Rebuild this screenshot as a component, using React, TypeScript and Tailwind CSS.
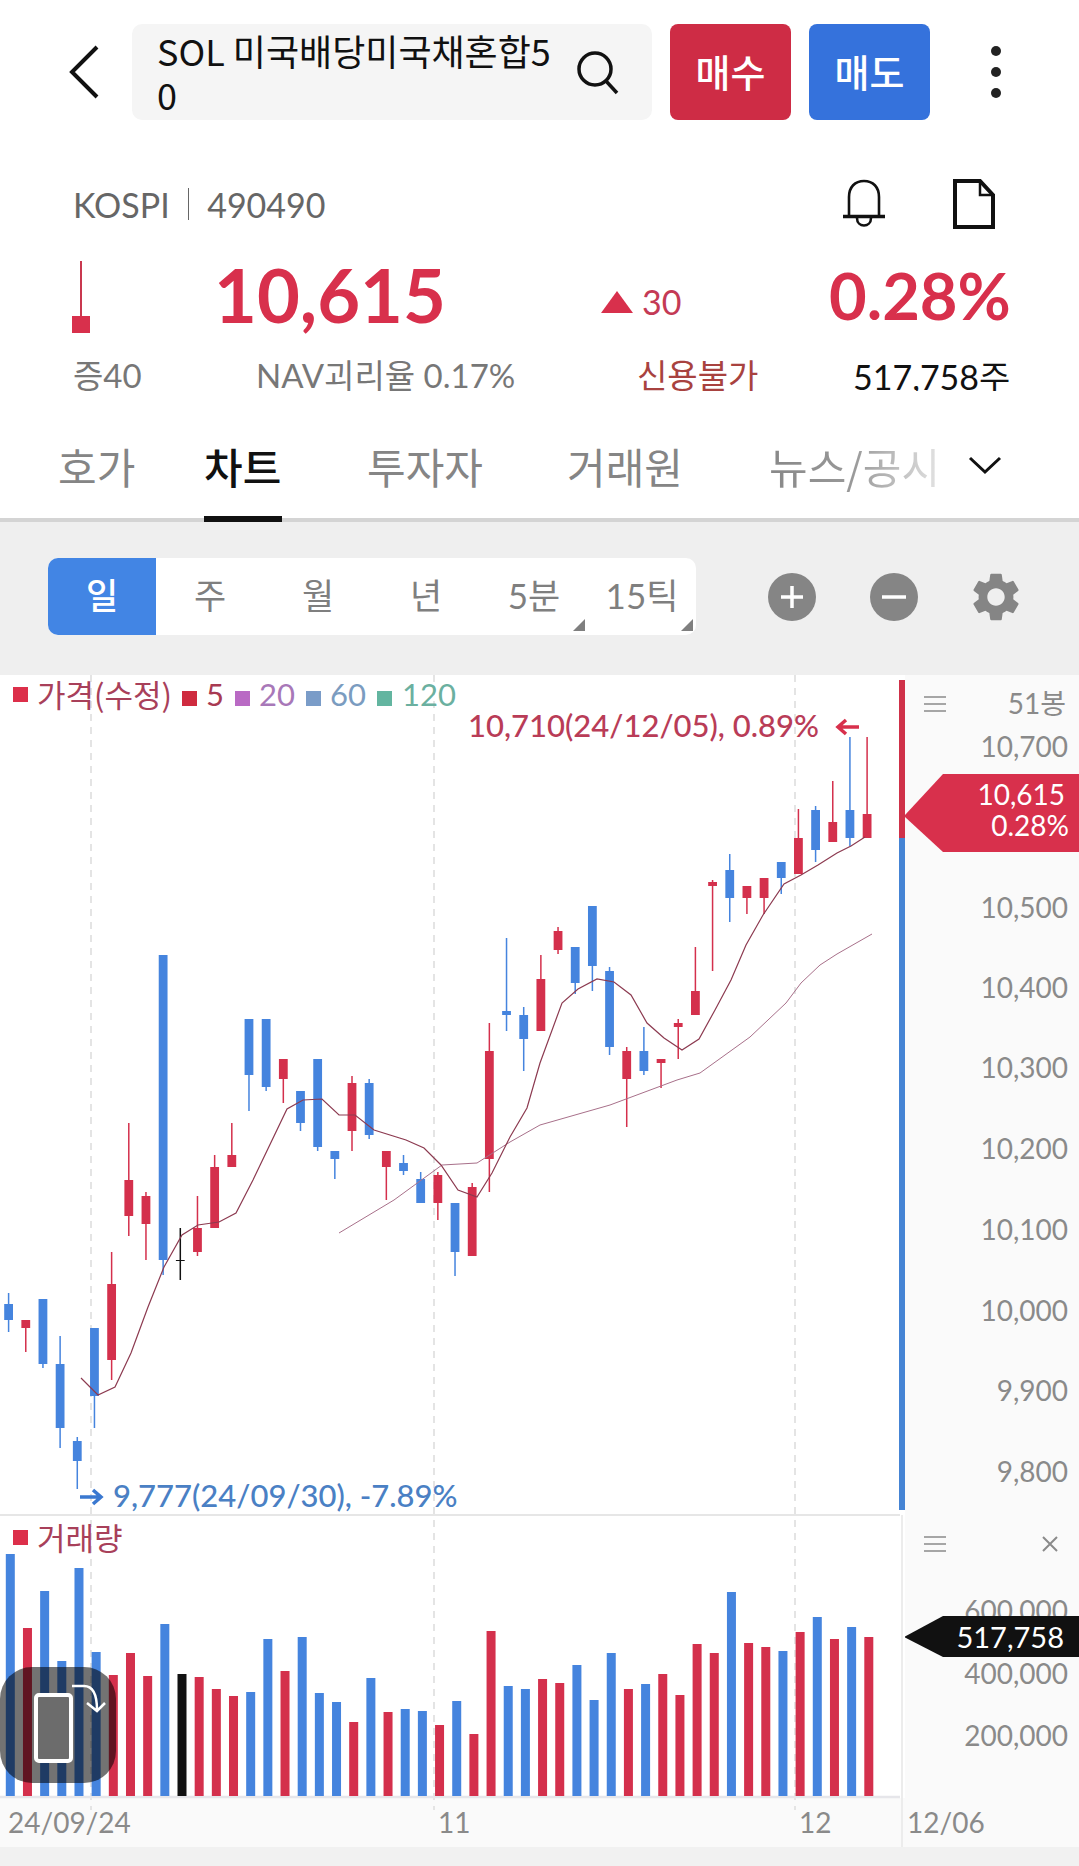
import React from "react";
import { MdSettings } from "react-icons/md";

type C = [string, number, number, number, number];
const RED = "#d4304c";
const BLUE = "#4584de";
const candles: C[] = [
  ["b",1293,1332,1304,1320],["r",1320,1352,1320,1328],["b",1299,1368,1299,1364],["b",1336,1448,1364,1428],
  ["b",1437,1489,1441,1461],["b",1328,1428,1328,1396],["r",1252,1380,1284,1360],["r",1123,1236,1180,1216],
  ["r",1192,1260,1196,1224],["b",955,1275,955,1260],["k",1228,1280,1260,1261],["r",1196,1256,1228,1252],
  ["r",1155,1228,1167,1228],["r",1123,1167,1155,1167],["b",1019,1111,1019,1075],["b",1019,1091,1019,1087],
  ["r",1059,1103,1059,1079],["b",1091,1131,1091,1123],["b",1059,1151,1059,1147],["b",1151,1179,1151,1159],
  ["r",1076,1151,1083,1131],["b",1079,1139,1083,1135],["r",1151,1200,1151,1167],["b",1155,1175,1163,1171],
  ["b",1172,1203,1179,1203],["r",1172,1220,1175,1203],["b",1203,1276,1203,1252],["r",1183,1256,1187,1256],
  ["r",1023,1192,1051,1159],["b",938,1031,1011,1015],["b",1007,1071,1015,1039],["r",955,1031,979,1031],
  ["r",927,954,931,950],["b",947,994,947,983],["b",906,991,906,966],["b",967,1055,971,1047],
  ["r",1047,1127,1051,1079],["b",1027,1075,1051,1071],["r",1059,1088,1059,1063],["r",1019,1059,1023,1027],
  ["r",947,1015,991,1015],["r",880,971,882,886],["b",854,922,870,898],["r",886,914,886,898],
  ["r",878,914,878,898],["b",862,894,862,878],["r",809,874,838,874],["b",806,862,810,850],
  ["r",781,842,822,842],["b",737,846,810,838],["r",737,838,814,838],
];
const vols = [1554,1628,1591,1661,1568,1652,1675,1653,1676,1624,1674,1677,1689,1696,1692,1639,1671,1637,1693,1702,1722,1678,1712,1709,1711,1725,1701,1734,1631,1686,1689,1679,1683,1665,1700,1653,1689,1684,1674,1695,1644,1653,1592,1643,1647,1651,1632,1617,1639,1627,1637];
const ma5 = "81,1378 90,1387 98,1395 115,1387 131,1353 148,1307 164,1267 182,1235 198,1225 219,1222 236,1213 253,1180 287,1109 303,1100 322,1099 339,1115 355,1115 374,1130 406,1140 424,1148 441,1165 458,1190 477,1197 492,1173 510,1137 527,1108 540,1063 562,1003 578,989 597,979 614,982 631,995 647,1023 664,1038 682,1050 699,1039 715,1010 731,980 746,945 763,915 784,884 801,875 818,865 837,853 851,846 865,837";
const ma20 = "339,1233 394,1200 442,1165 477,1163 510,1142 540,1125 610,1105 677,1080 700,1073 750,1037 786,1003 801,983 820,965 837,954 872,934";
const col = (c: string) => (c === "r" ? RED : c === "b" ? BLUE : "#111");
const ticks = [["10,700",746],["10,500",907],["10,400",987],["10,300",1067],["10,200",1148],["10,100",1229],["10,000",1310],["9,900",1390],["9,800",1471],["400,000",1673],["200,000",1735]] as [string, number][];
const segs = ["주","월","년","5분","15틱"];

function Hamburger() {
  return (
    <svg width="22" height="18" viewBox="0 0 22 18" stroke="#8a8a8a" strokeWidth="1.6">
      <path d="M0 2h22M0 9h22M0 16h22" />
    </svg>
  );
}
function Sq({ c }: { c: string }) {
  return <span className="inline-block w-[15px] h-[15px]" style={{ background: c }} />;
}

export default function App() {
  return (
    <div className="w-[1079px] h-[1866px] overflow-hidden bg-[#f1f1f1] flex flex-col text-[#888]" style={{ fontFamily: '"Lato","Noto Sans CJK KR",sans-serif' }}>
      {/* top bar */}
      <div className="bg-white h-[145px] flex items-start pt-[24px] shrink-0">
        <div className="w-[132px] h-[96px] flex items-center pl-[68px]">
          <svg width="32" height="54" viewBox="0 0 32 54" fill="none" stroke="#111" strokeWidth="4"><path d="M29 2 4 27l25 25" /></svg>
        </div>
        <div className="w-[520px] h-[96px] rounded-[10px] bg-[#f5f5f5] flex items-center pl-[25px] pr-[31px] justify-between">
          <div className="w-[402px] break-all text-[36px] leading-[44px] text-[#111]" style={{ fontFamily: '"Noto Sans CJK KR",sans-serif' }}>SOL 미국배당미국채혼합50</div>
          <svg width="46" height="46" viewBox="0 0 46 46" fill="none" stroke="#111" strokeWidth="3.5"><circle cx="20" cy="20" r="16" /><path d="m31 32 11 12" /></svg>
        </div>
        <button className="ml-[18px] w-[121px] h-[96px] rounded-[8px] bg-[#ce2c45] text-white text-[38px] font-medium pb-[4px]" style={{ fontFamily: '"Noto Sans CJK KR",sans-serif' }}>매수</button>
        <button className="ml-[18px] w-[121px] h-[96px] rounded-[8px] bg-[#3572dc] text-white text-[38px] font-medium pb-[4px]" style={{ fontFamily: '"Noto Sans CJK KR",sans-serif' }}>매도</button>
        <div className="ml-[61px] h-[96px] flex flex-col items-center justify-center gap-[11px]">
          <span className="w-[10px] h-[10px] rounded-full bg-[#222]" />
          <span className="w-[10px] h-[10px] rounded-full bg-[#222]" />
          <span className="w-[10px] h-[10px] rounded-full bg-[#222]" />
        </div>
      </div>
      {/* code row */}
      <div className="bg-white h-[90px] shrink-0 flex items-center justify-between pl-[73px] pr-[83px] pt-[28px]">
        <div className="text-[34px] text-[#666] flex items-center">KOSPI<span className="mx-[18px] w-[1.5px] h-[32px] bg-[#666]" />490490</div>
        <div className="flex items-center gap-[65px]">
          <svg width="46" height="50" viewBox="0 0 46 50" fill="none" stroke="#111" strokeWidth="2.6"><path d="M8 37V18C8 8 14 2 23 2s15 6 15 16v19" /><path d="M2 37.5h42" strokeWidth="3.5" /><path d="M16 39c0 10 14 10 14 0" /></svg>
          <svg width="44" height="50" viewBox="0 0 44 50" fill="none" stroke="#111" strokeWidth="4"><path d="M3 2h25l13 14v32H3z" /><path d="M28 2v14h13" strokeWidth="2.5" /></svg>
        </div>
      </div>
      {/* price row */}
      <div className="bg-white h-[100px] shrink-0 flex items-center relative">
        <div className="w-[214px] pl-[72px] h-full flex flex-col items-start pt-[26px]">
          <span className="ml-[8px] w-[2px] h-[55px] bg-[#c9384f]" />
          <span className="w-[18px] h-[17px] bg-[#d8304c]" />
        </div>
        <div className="w-[387px] text-[74px] leading-none font-bold text-[#d8304c] pt-[20px]">10,615</div>
        <div className="flex items-center w-[228px] pt-[34px]">
          <span className="w-0 h-0 border-l-[16px] border-r-[16px] border-b-[22px] border-l-transparent border-r-transparent border-b-[#d8304c]" />
          <span className="ml-[9px] text-[34px] leading-none text-[#c43a55]">30</span>
        </div>
        <div className="text-[65px] leading-none font-bold text-[#d8304c] pt-[20px]">0.28%</div>
      </div>
      <div className="bg-white h-[56px] shrink-0 flex items-center text-[33px] pt-[26px]">
        <div className="w-[256px] pl-[73px] text-[#777]">증40</div>
        <div className="w-[381px] text-[#777]">NAV괴리율 0.17%</div>
        <div className="w-[216px] text-[#a8423f]">신용불가</div>
        <div className="text-[#111] text-[34px] whitespace-nowrap">517,758주</div>
      </div>
      {/* tabs */}
      <div className="bg-white h-[131px] shrink-0 flex items-center border-b-[4px] border-[#d4d4d4] text-[42px] relative pt-[21px]" style={{ fontFamily: '"Noto Sans CJK KR",sans-serif' }}>
        <div className="w-[204px] pl-[58px] text-[#858585]">호가</div>
        <div className="w-[163px] h-full flex items-center text-[#111] font-medium relative">차트<span className="absolute left-0 -bottom-[4px] w-[78px] h-[6px] bg-[#111]" /></div>
        <div className="w-[200px] text-[#858585] whitespace-nowrap">투자자</div>
        <div className="w-[202px] text-[#858585] whitespace-nowrap">거래원</div>
        <div className="w-[167px] overflow-hidden whitespace-nowrap bg-linear-to-r from-[#888] via-[#999] to-[#e0e0e0] bg-clip-text text-transparent">뉴스/공시</div>
        <svg className="ml-[32px]" width="34" height="20" viewBox="0 0 34 20" fill="none" stroke="#111" strokeWidth="3"><path d="m2 3 15 14L32 3" /></svg>
      </div>
      {/* toolbar */}
      <div className="h-[153px] shrink-0 bg-[#efefef] flex items-start pt-[36px] pl-[48px]">
        <div className="w-[648px] h-[77px] rounded-[10px] bg-white flex overflow-hidden text-[35px] text-[#7f7f7f]">
          <div className="w-[108px] bg-[#4285e4] text-white flex items-center justify-center pb-[2px] font-medium">일</div>
          {segs.map((s, i) => (
            <div key={s} className="w-[108px] relative flex items-center justify-center pb-[2px]">
              {s}
              {i > 2 && <span className="absolute right-[3px] bottom-[4px] w-0 h-0 border-l-[12px] border-b-[12px] border-l-transparent border-b-[#7f7f7f]" />}
            </div>
          ))}
        </div>
        <div className="ml-[72px] h-[77px] flex items-center gap-[54px]">
          <span className="w-[48px] h-[48px] rounded-full bg-[#858585] flex items-center justify-center">
            <svg width="26" height="26" viewBox="0 0 26 26" stroke="#fff" strokeWidth="3.5"><path d="M13 2v22M2 13h22" /></svg>
          </span>
          <span className="w-[48px] h-[48px] rounded-full bg-[#858585] flex items-center justify-center">
            <svg width="24" height="6" viewBox="0 0 24 6" stroke="#fff" strokeWidth="3.5"><path d="M0 3h24" /></svg>
          </span>
          <MdSettings size={58} color="#858585" className="-ml-[5px]" />
        </div>
      </div>
      {/* chart */}
      <div className="h-[1172px] shrink-0 flex relative">
        <div className="w-[905px] relative bg-white">
          <svg width="905" height="1172" viewBox="0 675 905 1172" className="block">
            <rect x="0" y="1798" width="905" height="49" fill="#fafafa" />
            {[91, 434, 795].map((x) => (
              <line key={x} x1={x} x2={x} y1="675" y2="1810" stroke="#e4e4e4" strokeWidth="2" strokeDasharray="7 6" />
            ))}
            <line x1="0" x2="900" y1="1515" y2="1515" stroke="#e6e6e6" strokeWidth="2" />
            <line x1="0" x2="900" y1="1797" y2="1797" stroke="#e6e6ea" strokeWidth="2.5" />
            {candles.map((c, i) => {
              const x = 8.6 + 17.17 * i;
              return (
                <g key={i} fill={col(c[0])} stroke="none">
                  <rect x={x - 0.75} y={c[1]} width="1.5" height={c[2] - c[1]} />
                  <rect x={x - 4.4} y={c[3]} width="8.8" height={Math.max(1, c[4] - c[3])} />
                </g>
              );
            })}
            <polyline points={ma20} fill="none" stroke="#a8708a" strokeWidth="1" />
            <polyline points={ma5} fill="none" stroke="#8c3a50" strokeWidth="1.2" />
            {vols.map((t, i) => (
              <rect key={i} x={5.8 + 17.17 * i} y={t} width="9" height={1796 - t} fill={col(candles[i][0])} />
            ))}
            <rect x="899" y="680" width="6" height="158" fill="#cf3149" />
            <rect x="899" y="838" width="6" height="672" fill="#4584d4" />
            <line x1="902" x2="902" y1="1515" y2="1847" stroke="#ececec" strokeWidth="2" />
          </svg>
          {/* legend */}
          <div className="absolute left-[13px] top-[1px] flex items-center text-[31px] leading-[36px] whitespace-nowrap">
            <Sq c="#dc2f4a" />
            <span className="ml-[9px] text-[#a8405a]" style={{ fontFamily: '"Noto Sans CJK KR",sans-serif', fontSize: 31 }}>가격(수정)</span>
            <span className="ml-[10px]"><Sq c="#cf2b3f" /></span>
            <span className="ml-[9px] text-[#a83a52]">5</span>
            <span className="ml-[11px]"><Sq c="#b96ac4" /></span>
            <span className="ml-[9px] text-[#a878b8]">20</span>
            <span className="ml-[11px]"><Sq c="#7a9cc8" /></span>
            <span className="ml-[9px] text-[#7b9cc0]">60</span>
            <span className="ml-[11px]"><Sq c="#63b5a0" /></span>
            <span className="ml-[10px] text-[#6bb0a0]">120</span>
          </div>
          <div className="absolute left-[468px] top-[32px] flex items-center text-[31px] leading-[36px] font-medium text-[#b93c57] whitespace-nowrap">
            10,710(24/12/05), 0.89%
            <svg className="ml-[16px] mt-[4px]" width="24" height="18" viewBox="0 0 24 18" fill="none" stroke="#d8304c" strokeWidth="3.5"><path d="M24 9H3M11 2 3 9l8 7" /></svg>
          </div>
          <div className="absolute left-[80px] top-[802px] flex items-center text-[31px] leading-[36px] font-medium text-[#4a80c4] whitespace-nowrap">
            <svg className="mr-[9px] mt-[4px]" width="24" height="18" viewBox="0 0 24 18" fill="none" stroke="#3a78d0" strokeWidth="3.5"><path d="M0 9h21M13 2l8 7-8 7" /></svg>
            9,777(24/09/30), -7.89%
          </div>
          <div className="absolute left-[13px] top-[844px] flex items-center leading-[36px] text-[31px] text-[#a8405a]" style={{ fontFamily: '"Noto Sans CJK KR",sans-serif' }}>
            <Sq c="#dc2f4a" /><span className="ml-[9px]">거래량</span>
          </div>
          <span className="absolute left-[8px] top-[1130px] text-[28px] leading-[34px] text-[#8a8a8a]">24/09/24</span>
          <span className="absolute left-[438px] top-[1130px] text-[28px] leading-[34px] text-[#8a8a8a]">11</span>
          <span className="absolute left-[799px] top-[1130px] text-[28px] leading-[34px] text-[#8a8a8a]">12</span>
          {/* rotate button */}
          <div className="absolute left-0 top-[992px] w-[116px] h-[116px] rounded-[32px] bg-black/55">
            <div className="absolute left-[34px] top-[26px] w-[39px] h-[70px] rounded-[5px] border-[4px] border-white bg-[#6c6c6c]" />
            <svg className="absolute left-[70px] top-[16px]" width="36" height="32" viewBox="0 0 36 32" fill="none" stroke="#fff" strokeWidth="2.5"><path d="M2 3h12c9 0 13 8 13 24M17 20l10 8 8-8" /></svg>
          </div>
        </div>
        <div className="flex-1 relative bg-[#fafafa] text-[#8a8a8a] text-[28px]">
          <span className="absolute left-[19px] top-[20px]"><Hamburger /></span>
          <span className="absolute right-[13px] top-[11px] text-[28px] leading-[34px]">51봉</span>
          {ticks.map(([t, y]) => (
            <span key={t} className="absolute right-[11px] leading-[34px]" style={{ top: y - 675 - 17 }}>{t}</span>
          ))}
          <span className="absolute right-[11px] top-[918px] leading-[34px]">600,000</span>
          <svg className="absolute left-0 top-[99px]" width="174" height="78" viewBox="0 0 174 78"><path d="M-1 42 38 0h136v78H38z" fill="#d8304c" /></svg>
          <div className="absolute right-[10px] top-[104px] text-white text-right text-[28px] leading-[31px]">
            <div className="pr-[4px]">10,615</div>
            <div>0.28%</div>
          </div>
          <svg className="absolute left-0 top-[941px]" width="174" height="41" viewBox="0 0 174 41"><path d="M-1 21 38 0h136v41H38z" fill="#111" /></svg>
          <span className="absolute right-[15px] top-[945px] text-white text-[29px] leading-[34px]">517,758</span>
          <span className="absolute left-[19px] top-[860px]"><Hamburger /></span>
          <svg className="absolute left-[137px] top-[860px]" width="16" height="18" viewBox="0 0 16 18" stroke="#8a8a8a" strokeWidth="2"><path d="m1 2 14 14M15 2 1 16" /></svg>
          <span className="absolute left-[2px] top-[1130px] leading-[34px]">12/06</span>
        </div>
      </div>
    </div>
  );
}
